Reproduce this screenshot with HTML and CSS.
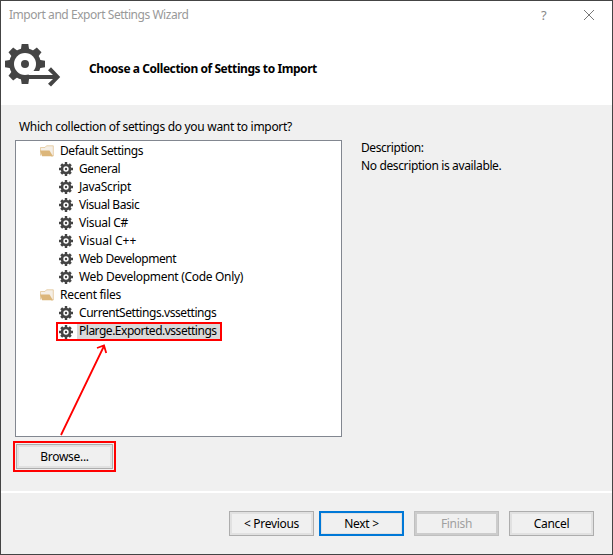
FILE: index.html
```html
<!DOCTYPE html>
<html lang="en">
<head>
<meta charset="utf-8">
<title>Import and Export Settings Wizard</title>
<link rel="stylesheet" href="styles.css">
</head>
<body>
<svg width="0" height="0" class="defs">
  <defs>
    <g id="teeth">
      <path id="tooth" d="M-4.200-14 -3.300-20H3.300L4.200-14Z"/>
      <use href="#tooth" transform="rotate(45)"/><use href="#tooth" transform="rotate(90)"/>
      <use href="#tooth" transform="rotate(135)"/><use href="#tooth" transform="rotate(180)"/>
      <use href="#tooth" transform="rotate(225)"/><use href="#tooth" transform="rotate(270)"/>
      <use href="#tooth" transform="rotate(315)"/>
    </g>
    <symbol id="gear" viewBox="0 0 14 14">
      <g fill="#444" transform="translate(7 7)">
        <path d="M-1.2-7H1.2V7H-1.2ZM-7-1.2H7V1.2H-7Z"/>
        <path d="M-1.400-6.8H1.400V6.8H-1.400ZM-6.8-1.400H6.8V1.400H-6.8Z" transform="rotate(45)"/>
        <circle r="5.300"/><circle r="2.700" fill="#fff"/><circle r="1.200"/>
      </g>
    </symbol>
    <symbol id="folder" viewBox="0 0 14 12">
      <path d="M.5 10.500V2.500H5L6.500.8H13.300V11H11" fill="#f5efe6" stroke="#e2c597" stroke-width=".8"/>
      <path d="M0 5.500H9.500L13 11.300H2.2Z" fill="#dcb67a"/>
    </symbol>
  </defs>
</svg>
<div class="window">
  <header class="header">
    <div class="titlebar">
      <span class="title">Import and Export Settings Wizard</span>
      <span class="help">?</span>
      <svg class="close" width="10" height="10" viewBox="0 0 10 10"><path d="M0 0 10 10M10 0 0 10" stroke="#777" fill="none"/></svg>
    </div>
    <div class="banner">
      <svg class="logo" width="58" height="46" viewBox="4 42 58 46">
        <g transform="translate(25 64)" fill="#444"><use href="#teeth"/><circle r="15.8"/><circle r="11" fill="#fff"/><circle r="4"/></g>
        <path d="M33 71H46V75H28ZM29 79H46V86H29Z" fill="#fff"/>
        <path d="M22 75H53L48 70.200 51 67.300 60.200 77 51 86.500 48 83.700 53 79H22Z" fill="#444"/>
      </svg>
      <h1 class="heading">Choose a Collection of Settings to Import</h1>
    </div>
  </header>
  <main class="content">
    <section class="collection">
      <p class="question">Which collection of settings do you want to import?</p>
      <ul class="tree">
        <li class="group"><svg class="folder"><use href="#folder"/></svg><span class="tight">Default Settings</span></li>
        <li><svg class="gear"><use href="#gear"/></svg><span class="tight">General</span></li>
        <li><svg class="gear"><use href="#gear"/></svg><span>JavaScript</span></li>
        <li><svg class="gear"><use href="#gear"/></svg><span class="tight">Visual Basic</span></li>
        <li><svg class="gear"><use href="#gear"/></svg><span>Visual C#</span></li>
        <li><svg class="gear"><use href="#gear"/></svg><span class="wide">Visual C++</span></li>
        <li><svg class="gear"><use href="#gear"/></svg><span class="tight">Web Development</span></li>
        <li><svg class="gear"><use href="#gear"/></svg><span>Web Development (Code Only)</span></li>
        <li class="group"><svg class="folder"><use href="#folder"/></svg><span>Recent files</span></li>
        <li><svg class="gear"><use href="#gear"/></svg><span class="tight">CurrentSettings.vssettings</span></li>
        <li class="selected"><svg class="gear"><use href="#gear"/></svg><span class="label tighter">Plarge.Exported.vssettings</span></li>
      </ul>
      <div class="callout"><button class="button browse">Browse...</button></div>
    </section>
    <section class="description">
      <p class="tight">Description:</p>
      <p class="detail">No description is available.</p>
    </section>
  </main>
  <footer class="footer">
    <button class="button">&lt; Previous</button>
    <button class="button primary">Next &gt;</button>
    <button class="button disabled" disabled>Finish</button>
    <button class="button">Cancel</button>
  </footer>
  <svg class="arrow" width="60" height="100" viewBox="55 340 60 100"><path d="M61 435 104 346M97 348 104 345.500 106.200 353" fill="none" stroke="#f00" stroke-width="1.800"/></svg>
</div>
</body>
</html>
```
FILE: styles.css
```css
* { box-sizing: border-box; }
body { margin: 0; font: 12px/18px "Noto Sans", "Open Sans", sans-serif; letter-spacing: -.3px; color: #000; }
p, ul, h1 { margin: 0; padding: 0; }
.defs { position: absolute; }
.window { position: relative; width: 613px; height: 555px; border: 1px solid #444; background: #f0f0f0; display: flex; flex-direction: column; white-space: nowrap; }
.header { height: 104px; background: #fff; }
.titlebar { display: flex; align-items: center; height: 30px; padding: 0 18px 2px 8px; color: #999; }
.title { flex: 1; letter-spacing: -.46px; }
.help { width: 8px; margin-right: 35px; font-size: 13px; color: #888; }
.banner { display: flex; padding: 11px 0 0 3px; }
.logo { flex: none; }
.heading { font-size: 12px; line-height: 18px; margin: 18px 0 0 27px; letter-spacing: -.43px; }
.content { height: 386px; display: flex; padding: 13px 0 0 14px; }
.collection { width: 327px; }
.question { padding-left: 4px; height: 22px; }
.tree { list-style: none; height: 297px; border: 1px solid #828790; background: #fff; padding-top: 1px; }
.tree li { display: flex; align-items: center; height: 18px; padding-left: 43px; }
.tree .group { padding-left: 24px; }
.tight { letter-spacing: -.44px; }
.tighter { letter-spacing: -.49px; }
.wide { letter-spacing: -.05px; }
.detail { letter-spacing: -.37px; }
.gear { width: 14px; height: 14px; margin-right: 6px; flex: none; }
.folder { width: 14px; height: 12px; margin-right: 6px; flex: none; }
.tree .selected { width: 166px; height: 19px; margin-left: 40px; padding-left: 1px; border: 2px solid #f00; }
.label { background: #d9d9d9; height: 15px; line-height: 14px; flex: 1; margin-left: -2px; padding-left: 2px; }
.callout { width: 103px; height: 31px; border: 2px solid #f00; margin: 4px 0 0 -2px; padding: 1px; }
.button { width: 85px; height: 25px; border: 1px solid #adadad; background: #f0f0f0; box-shadow: inset 0 0 0 2px #e1e1e1; padding: 0; font: inherit; letter-spacing: inherit; color: #000; }
.browse { width: 97px; display: block; }
.description { padding: 21px 0 0 19px; }
.footer { height: 63px; border-top: 2px solid #fff; display: flex; padding: 18px 0 0 228px; }
.footer .button + .button { margin-left: 5px; }
.footer .primary { border: 2px solid #0078d7; box-shadow: inset 0 0 0 1px #e1e1e1; }
.footer .button + .disabled { margin-left: 10px; border-color: #bfbfbf; box-shadow: inset 0 0 0 2px #ccc; color: #a0a0a0; }
.footer .disabled + .button { margin-left: 10px; }
.arrow { position: absolute; left: 54px; top: 339px; }
```
